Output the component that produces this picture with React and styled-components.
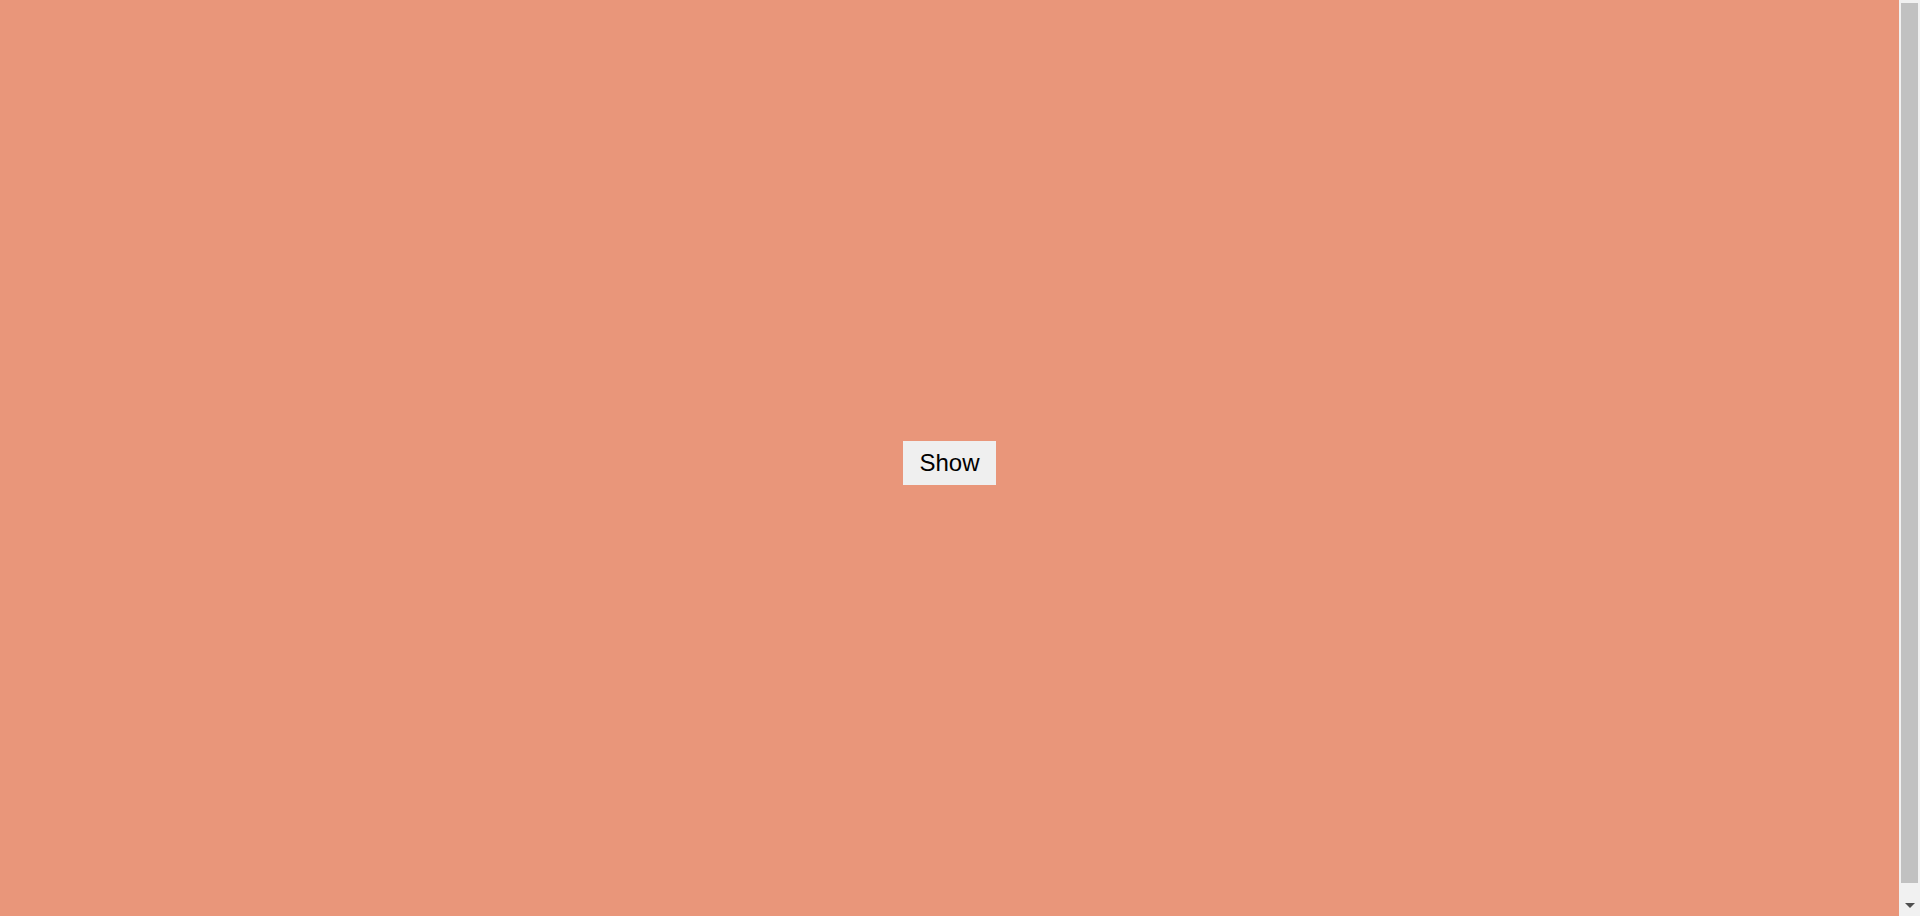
import React, { useState } from "react";
import styled, { createGlobalStyle } from "styled-components";

const GlobalStyle = createGlobalStyle`
  body {
    background: #e9967a;
    font-family: "Liberation Sans", Arial, sans-serif;
  }
`;

const Page = styled.div`
  min-height: 100vh;
  padding-right: 21px;
  box-sizing: border-box;
  display: flex;
  align-items: center;
  justify-content: center;
`;

const ToggleButton = styled.button`
  font-family: "Liberation Sans", Arial, sans-serif;
  font-size: 24px;
  padding: 8px 16px;
  margin-top: -6px;
  border: 0;
  background: #efefef;
  color: #000;
  cursor: pointer;
`;

// the window's scrollbar, drawn over the right edge
const ScrollTrack = styled.div`
  position: fixed;
  top: 0;
  right: 0;
  bottom: 0;
  width: 21px;
  background: #f1f1f1;
  display: flex;
  flex-direction: column;
  align-items: center;
  padding: 3px 0 4px;
  box-sizing: border-box;
`;

const ScrollThumb = styled.div`
  width: 17px;
  height: 880px;
  background: #c1c1c1;
`;

const ScrollArrow = styled.div`
  margin-top: auto;
  width: 0;
  height: 0;
  border-left: 5px solid transparent;
  border-right: 5px solid transparent;
  border-top: 5px solid #505050;
  margin-bottom: 4px;
`;

export default function App() {
  const [shown, setShown] = useState(false);
  return (
    <>
      <GlobalStyle />
      <Page>
        <ToggleButton onClick={() => setShown(!shown)}>
          {shown ? "Hide" : "Show"}
        </ToggleButton>
      </Page>
      <ScrollTrack aria-hidden="true">
        <ScrollThumb />
        <ScrollArrow />
      </ScrollTrack>
    </>
  );
}
